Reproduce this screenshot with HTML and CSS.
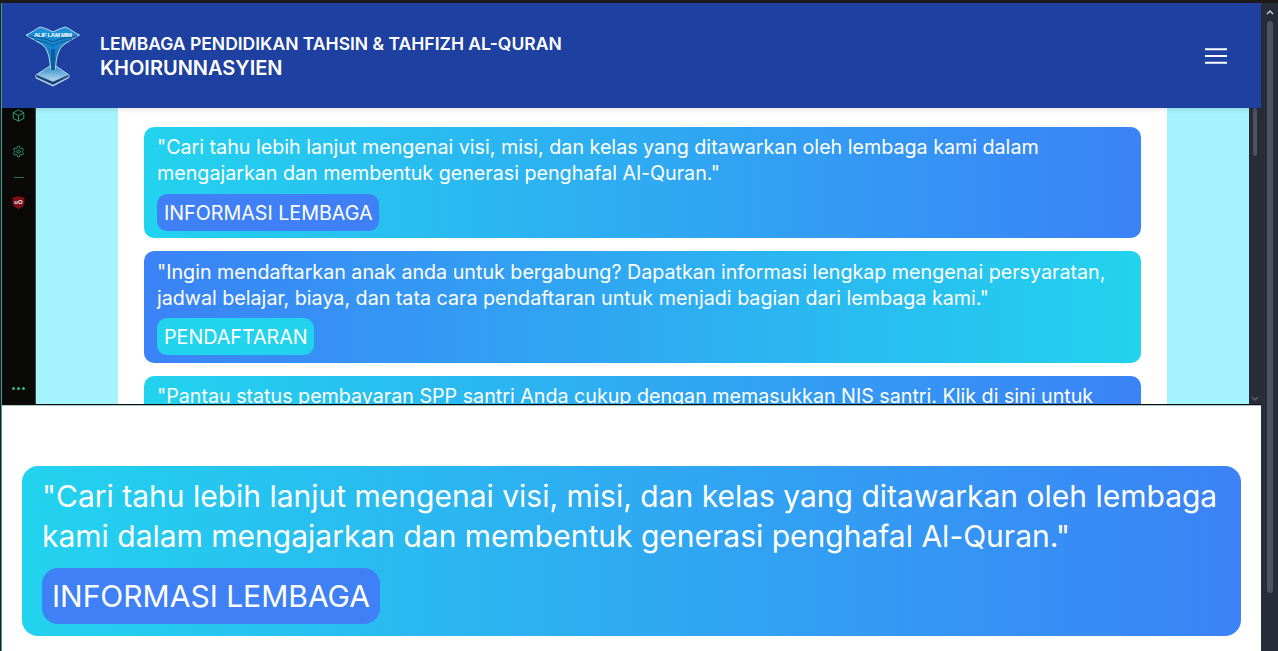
FILE: index.html
```html
<!DOCTYPE html>
<html lang="id">
<head>
<meta charset="utf-8">
<title>Khoirunnasyien</title>
<link rel="stylesheet" href="styles.css">
</head>
<body>
<div class="screen">
  <div class="topstrip"></div>
  <div class="desk">
    <div class="content">
      <section class="window">
        <header class="navbar">
          <div class="brand">
            <svg class="logo" viewBox="0 0 56 62" width="56" height="62">
              <defs>
                <linearGradient id="baseGrad" x1="0" y1="0" x2="0" y2="1"><stop offset="0" stop-color="#1f7fc4"/><stop offset="1" stop-color="#dff1fb"/></linearGradient>
                <linearGradient id="bowlGrad" x1="0" y1="0" x2="0" y2="1"><stop offset="0" stop-color="#1c93dc"/><stop offset="1" stop-color="#0f75bb"/></linearGradient>
              </defs>
              <path d="M28 39 L44 50 L44 52.500 L28 61 L11 53 L11 50 Z" fill="url(#baseGrad)" stroke="#c6d6e3" stroke-width="1"/>
              <path d="M11 52 L28 60 L44 51.500 L44 49.500 L28 56.500 L11 49.500 Z" fill="#123f78" stroke="#9fbcd2" stroke-width=".5"/>
              <path d="M1 10 C6 8 11 4 15 2 C20 3 24 5 28 7 C32 5 36 3 40.500 2 C45 4 50 8 54.500 10 C48 14 42 17 37 21 C32 27 31 36 30.500 44 L25.500 44 C25 36 24 27 19 21 C14 17 7 14 1 10 Z" fill="url(#bowlGrad)" stroke="#c3dcee" stroke-width="1"/>
              <path d="M4 11.500 C12 12.500 22 13.500 28 17 C34 13.500 44 12.500 52 11.500" fill="none" stroke="#0a4c85" stroke-width="1"/>
              <path d="M9 14.500 C15 16 23 17 28 21 C33 17 41 16 47 14.500" fill="none" stroke="#0a4c85" stroke-width=".8"/>
              <path d="M26 24 H30 V45 H26 Z" fill="#0a5fa2"/>
              <text class="logo-text" x="28" y="11.500" text-anchor="middle" textLength="38">ALIF LAM MIM</text>
            </svg>
            <div class="brand-text">
              <div class="brand-top">LEMBAGA PENDIDIKAN TAHSIN &amp; TAHFIZH AL-QURAN</div>
              <div class="brand-name">KHOIRUNNASYIEN</div>
            </div>
          </div>
          <button class="burger" aria-label="Menu">
            <svg viewBox="0 0 22 16" width="22" height="16"><path d="M0 1.330 H22 M0 8 H22 M0 14.670 H22" stroke="#fff" stroke-width="2" fill="none"/></svg>
          </button>
        </header>
        <div class="viewport">
          <aside class="activity">
            <div class="activity-icons">
              <svg viewBox="0 0 16 16" width="13" height="13" class="act-icon"><path d="M8 1 L14.500 4.500 V11.500 L8 15 L1.500 11.500 V4.500 Z M1.500 4.500 L8 8 L14.500 4.500 M8 8 V15" fill="none" stroke="#2fa87a" stroke-width="1.100"/></svg>
              <svg viewBox="0 0 24 24" width="13" height="13" class="act-icon act-gear"><path d="M12.220 2h-.44a2 2 0 0 0-2 2v.18a2 2 0 0 1-1 1.730l-.43.25a2 2 0 0 1-2 0l-.15-.08a2 2 0 0 0-2.730.73l-.22.38a2 2 0 0 0 .73 2.730l.15.1a2 2 0 0 1 1 1.720v.51a2 2 0 0 1-1 1.740l-.15.09a2 2 0 0 0-.73 2.730l.22.38a2 2 0 0 0 2.730.73l.15-.08a2 2 0 0 1 2 0l.43.25a2 2 0 0 1 1 1.730V20a2 2 0 0 0 2 2h.44a2 2 0 0 0 2-2v-.18a2 2 0 0 1 1-1.730l.43-.25a2 2 0 0 1 2 0l.15.08a2 2 0 0 0 2.730-.73l.22-.39a2 2 0 0 0-.73-2.730l-.15-.08a2 2 0 0 1-1-1.740v-.5a2 2 0 0 1 1-1.740l.15-.09a2 2 0 0 0 .73-2.730l-.22-.38a2 2 0 0 0-2.730-.73l-.15.08a2 2 0 0 1-2 0l-.43-.25a2 2 0 0 1-1-1.730V4a2 2 0 0 0-2-2z" fill="none" stroke="#2fa87a" stroke-width="1.800"/><circle cx="12" cy="12" r="3" fill="none" stroke="#2fa87a" stroke-width="1.800"/></svg>
              <div class="act-dash"></div>
              <div class="act-badge"><svg viewBox="0 0 13 13" width="13" height="13"><path d="M6.500 0 L12.500 1.500 V7 C12.500 10 9 12 6.500 13 C4 12 .5 10 .5 7 V1.500 Z" fill="#7d0f16"/><text class="badge-text" x="6.500" y="8" text-anchor="middle">uO</text></svg></div>
            </div>
            <div class="act-dots"><i></i><i></i><i></i></div>
          </aside>
          <div class="stage">
            <main class="sheet">
              <article class="card card-a">
                <p>"Cari tahu lebih lanjut mengenai visi, misi, dan kelas yang ditawarkan oleh lembaga kami dalam mengajarkan dan membentuk generasi penghafal Al-Quran."</p>
                <a class="pill pill-blue">INFORMASI LEMBAGA</a>
              </article>
              <article class="card card-b">
                <p>"Ingin mendaftarkan anak anda untuk bergabung? Dapatkan informasi lengkap mengenai persyaratan, jadwal belajar, biaya, dan tata cara pendaftaran untuk menjadi bagian dari lembaga kami."</p>
                <a class="pill pill-cyan">PENDAFTARAN</a>
              </article>
              <article class="card card-a">
                <p>"Pantau status pembayaran SPP santri Anda cukup dengan memasukkan NIS santri. Klik di sini untuk melihat status pembayaran terbaru."</p>
              </article>
            </main>
          </div>
          <div class="inner-scroll">
            <div class="inner-thumb"></div>
            <svg class="inner-arrow" viewBox="0 0 8 6" width="8" height="6"><path d="M1 1 L4 4 L7 1" fill="none" stroke="#5a5d6b" stroke-width="1.500"/></svg>
          </div>
        </div>
      </section>
      <section class="zoomed">
        <article class="big-card">
          <p>"Cari tahu lebih lanjut mengenai visi, misi, dan kelas yang ditawarkan oleh lembaga kami dalam mengajarkan dan membentuk generasi penghafal Al-Quran."</p>
          <a class="big-pill">INFORMASI LEMBAGA</a>
        </article>
      </section>
    </div>
    <div class="outer-scroll">
      <svg viewBox="0 0 8 6" width="8" height="6"><path d="M1 5 L4 2 L7 5" fill="none" stroke="#c9cad0" stroke-width="1.500"/></svg>
      <div class="outer-thumb"></div>
    </div>
  </div>
</div>
</body>
</html>
```
FILE: styles.css
```css
* { box-sizing: border-box; }
html, body { margin: 0; padding: 0; height: 100%; }
body { overflow: hidden; font-family: Inter, "Liberation Sans", sans-serif; }
p { margin: 0; }

.screen { width: 1278px; height: 651px; display: flex; flex-direction: column; background: #282c39; overflow: hidden; }
.topstrip { height: 3px; background: #1c1a1b; flex: none; }
.desk { flex: 1; display: flex; min-height: 0; border-left: 1px solid #12201f; }
.content { width: 1260px; display: flex; flex-direction: column; border-left: 1px solid #4a9d8c; }

.window { height: 403px; flex: none; display: flex; flex-direction: column; border-bottom: 1px solid #a9c9c8; overflow: hidden; position: relative; }
.navbar { height: 105px; flex: none; background: #1e40a0; display: flex; align-items: center; justify-content: space-between; padding: 0 34px 0 23px; box-shadow: 0 2px 4px rgba(0,0,0,.1); position: relative; z-index: 2; }
.brand { display: flex; align-items: center; gap: 19px; }
.logo { display: block; }
.logo-text { font: 700 6px "Liberation Sans", sans-serif; fill: #fff; }
.brand-text { color: #fff; font-weight: 600; margin-top: 5px; }
.brand-top { font-size: 17.500px; line-height: 20px; }
.brand-name { font-size: 20px; line-height: 28px; }
.burger { width: 22px; height: 16px; padding: 0; border: 0; background: none; margin-top: 1px; }
.burger svg { display: block; }

.viewport { flex: 1; display: flex; min-height: 0; border-bottom: 1px solid #0b0b0b; }
.activity { width: 34px; flex: none; background: #0a0908; border-right: 1px solid #3a4a48; display: flex; flex-direction: column; justify-content: space-between; align-items: center; padding: 1px 0 14px; }
.activity-icons { display: flex; flex-direction: column; align-items: center; }
.act-icon { display: block; }
.act-gear { margin-top: 23px; }
.act-dash { width: 10px; height: 1px; background: #2b6e58; margin-top: 18.500px; }
.act-badge { margin-top: 18px; height: 13px; }
.act-badge svg { display: block; }
.badge-text { font: 700 6px "Liberation Sans", sans-serif; fill: #eee; }
.act-dots { display: flex; gap: 2px; }
.act-dots i { width: 3px; height: 3px; border-radius: 50%; background: #2fb98a; }

.stage { flex: 1; background: #a5f3fc; padding: 0 82px; min-width: 0; overflow: hidden; }
.sheet { background: #fff; height: 100%; padding: 19px 26px 0; display: flex; flex-direction: column; gap: 13px; }
.card { flex: none; border-radius: 10px; color: #fff; font-size: 19.680px; line-height: 26px; }
.card-a { background: linear-gradient(to right, #22d3ee, #3b82f6); padding: 7px 13px; }
.card-b { background: linear-gradient(to right, #3b82f6, #22d3ee); padding: 8px 13px; }
.pill { display: inline-block; padding: 5px 6px 4px 7px; border-radius: 10px; line-height: 28px; }
.card-a .pill { margin-top: 8px; }
.card-b .pill { margin-top: 7px; }
.pill-blue { background: #3f80f7; }
.pill-cyan { background: #22d3ee; }

.inner-scroll { width: 12px; flex: none; background: #282c39; display: flex; flex-direction: column; align-items: center; justify-content: space-between; }
.inner-thumb { width: 4px; height: 48px; border-radius: 2px; background: #4f5164; }
.inner-arrow { display: block; margin-bottom: 2px; }

.zoomed { flex: 1; background: #fff; padding: 60px 20px 0 20px; min-height: 0; }
.big-card { width: 1219px; height: 170px; border-radius: 16px; background: linear-gradient(to right, #22d3ee, #3b82f6); color: #fff; padding: 10px 20px; font-size: 30px; line-height: 40px; }
.big-pill { display: inline-block; margin-top: 12px; padding: 8px 10px; border-radius: 16px; background: #3f80f7; line-height: 40px; }

.outer-scroll { width: 17px; flex: none; background: #282c39; display: flex; flex-direction: column; align-items: center; padding: 6px 0 0 1px; }
.outer-scroll svg { display: block; }
.outer-thumb { width: 6px; height: 572px; margin-top: 6px; border-radius: 3px; background: #4f5164; flex: none; }
```
